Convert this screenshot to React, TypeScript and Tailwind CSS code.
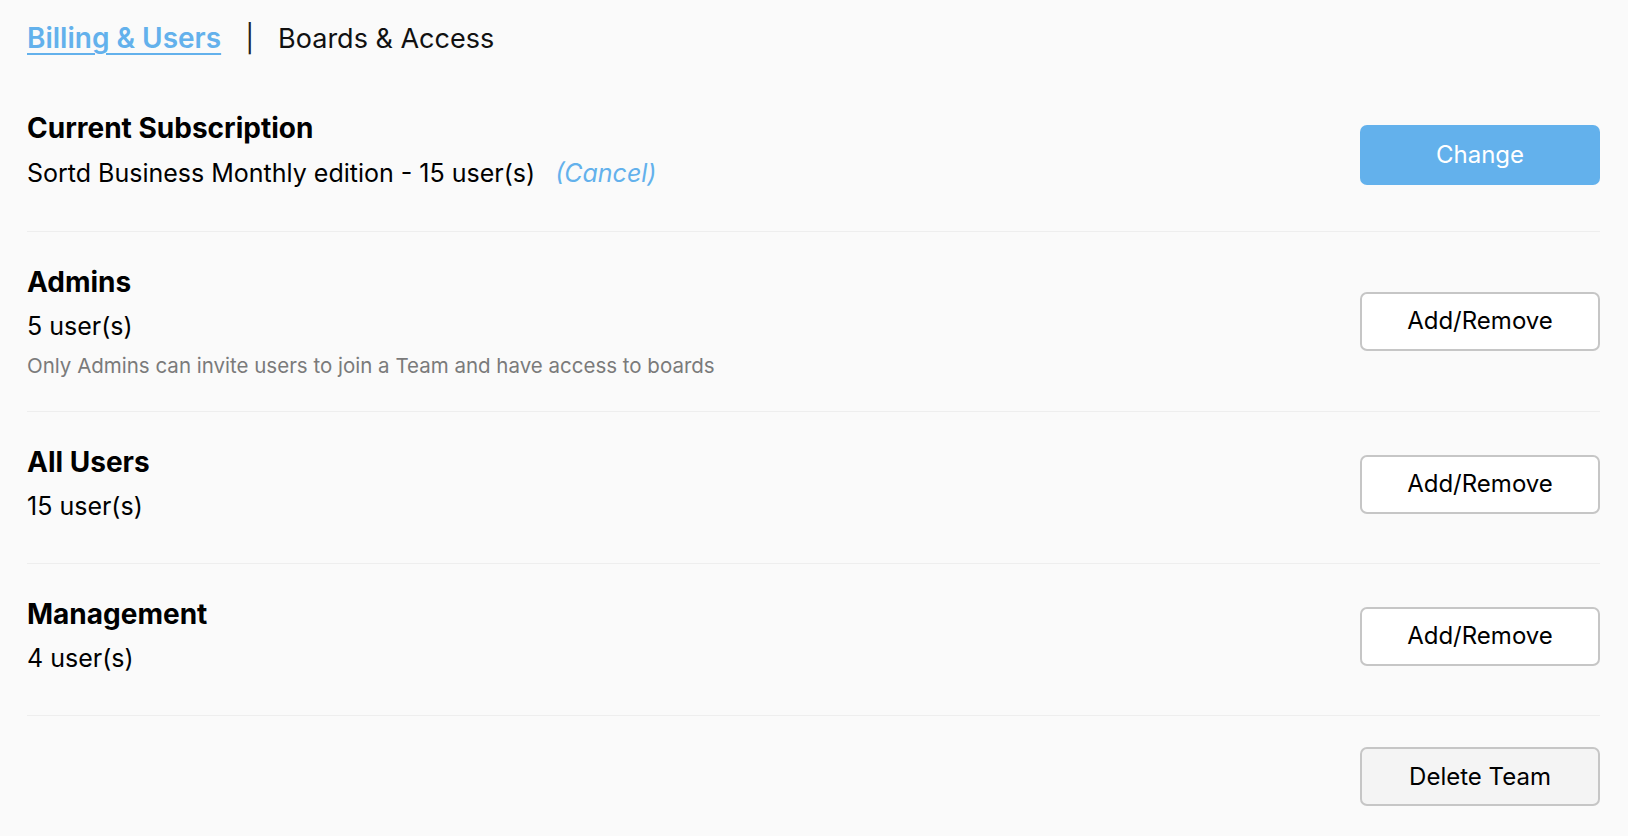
const rows = [
  {
    title: "Admins",
    count: "5 user(s)",
    note: "Only Admins can invite users to join a Team and have access to boards",
  },
  { title: "All Users", count: "15 user(s)" },
  { title: "Management", count: "4 user(s)" },
];

function OutlineButton({ label, muted }: { label: string; muted?: boolean }) {
  return (
    <button
      className={`w-[240px] h-[59px] rounded-[7px] border-2 border-[#c6c6c6] text-[24px] text-black ${
        muted ? "bg-[#f4f4f4]" : "bg-white"
      }`}
    >
      {label}
    </button>
  );
}

export default function App() {
  return (
    <div
      className="min-h-screen w-full bg-[#fafafa] text-black"
      style={{ fontFamily: "Inter, 'Noto Sans', sans-serif" }}
    >
      <div className="w-[1600px] pl-[27px]">
        <nav className="flex items-center h-[76px] leading-none">
          <a className="text-[28px] text-[#63b1ec] underline underline-offset-[5px] decoration-2 font-semibold">
            Billing &amp; Users
          </a>
          <span className="mx-[24px] text-[27px] text-[#222]">|</span>
          <a className="text-[27px] text-[#111]">Boards &amp; Access</a>
        </nav>

        <section className="flex justify-between border-b border-[#eeeeee] pt-[34px] pb-[40px]">
          <div className="flex flex-col">
            <h2 className="text-[28px] font-bold leading-[36px]">Current Subscription</h2>
            <p className="mt-[9px] text-[25px] leading-[36px]">
              Sortd Business Monthly edition - 15 user(s)
              <span className="ml-[20px] italic text-[#63b1ec]">(Cancel)</span>
            </p>
          </div>
          <button className="mt-[15px] w-[240px] h-[60px] rounded-[7px] bg-[#63b1ec] text-[24px] text-white">
            Change
          </button>
        </section>

        {rows.map((row) => (
          <section
            key={row.title}
            className={`flex items-center justify-between border-b border-[#eeeeee] pt-[32px] ${
              row.note ? "pb-[33px]" : "pb-[39px]"
            }`}
          >
            <div className="flex flex-col">
              <h2 className="text-[28px] font-bold leading-[36px]">{row.title}</h2>
              <p className="mt-[8px] text-[25px] leading-[36px]">{row.count}</p>
              {row.note && (
                <p className="mt-[10px] text-[20.5px] leading-[24px] text-[#7a7a7a]">{row.note}</p>
              )}
            </div>
            <OutlineButton label="Add/Remove" />
          </section>
        ))}

        <div className="flex justify-end pt-[31px]">
          <OutlineButton label="Delete Team" muted />
        </div>
      </div>
    </div>
  );
}
